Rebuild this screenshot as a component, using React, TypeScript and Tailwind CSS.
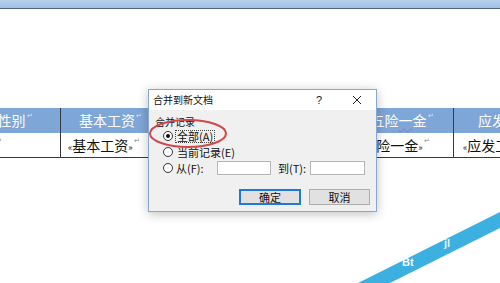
import React from "react";

const cols = [
  { head: "性别", data: "性别", w: "w-[110px] -ml-[50px]", headPad: "pl-[20px]", dataPad: "pl-[8px]" },
  { head: "基本工资", data: "基本工资", w: "w-[100px]", headPad: "", dataPad: "pl-[7px]" },
  { head: "绩效工资", data: "绩效工资", w: "w-[100px]", headPad: "", dataPad: "pl-[7px]" },
  { head: "加班费", data: "加班费", w: "w-[90px]", headPad: "", dataPad: "pl-[7px]" },
  { head: "五险一金", data: "五险一金", w: "w-[103px]", headPad: "", dataPad: "pl-[7px]" },
  { head: "应发工资", data: "应发工资", w: "w-[112px]", headPad: "", dataPad: "pl-[9px]" },
];

const Mark = ({ light }: { light?: boolean }) => (
  <span className={`text-[7px] align-top ml-[1px] ${light ? "text-[#dbe6f5]" : "text-[#8a8a8a]"}`}>↵</span>
);

const HeadText = ({ text }: { text: string }) => {
  if (text === "五险一金") {
    return (
      <>
        五险<span className="underline decoration-wavy decoration-[#9a6bc0] decoration-1 underline-offset-2">一</span>金
      </>
    );
  }
  return <>{text}</>;
};

const Radio = ({ checked }: { checked?: boolean }) => (
  <span className="w-[10px] h-[10px] rounded-full border border-[#333] bg-white flex items-center justify-center shrink-0">
    {checked && <span className="w-[4px] h-[4px] rounded-full bg-[#111]" />}
  </span>
);

export default function App() {
  return (
    <div className="relative w-[500px] h-[283px] overflow-hidden bg-white font-['Noto_Sans_CJK_SC','Noto_Sans',sans-serif]">
      {/* ribbon bar on top */}
      <div className="h-[9px] bg-gradient-to-b from-[#b8d0ee] to-[#a2bfe4] border-b border-[#53667f]" />
      <div className="h-[99px]" />

      {/* mail merge table */}
      <div className="flex flex-col">
        <div className="flex h-[25px] bg-[#7ea6d7]">
          {cols.map((c, i) => (
            <div
              key={i}
              className={`${c.w} ${c.headPad} shrink-0 flex items-center justify-center text-white text-[14px] ${i > 0 ? "border-l border-[#2f3b4a]" : ""}`}
            >
              <span className="whitespace-nowrap">
                <HeadText text={c.head} />
                <Mark light />
              </span>
            </div>
          ))}
        </div>
        <div className="flex h-[25px] border-b border-[#3a3a3a]">
          {cols.map((c, i) => (
            <div
              key={i}
              className={`${c.w} ${c.dataPad} shrink-0 flex items-center text-[#111] text-[14px] ${i > 0 ? "border-l border-[#3a3a3a]" : ""}`}
            >
              <span className="whitespace-nowrap">
                <span className="text-[9px]">«</span>
                {c.data}
                <span className="text-[9px]">»</span>
                <Mark />
              </span>
            </div>
          ))}
        </div>
      </div>

      {/* dialog */}
      <div className="absolute left-[148px] top-[89px] w-[229px] h-[123px] flex flex-col border border-[#86a8d2] bg-[#f0f0f0] shadow-[0_2px_10px_rgba(0,0,0,0.25)] text-[#111]">
        <div className="h-[20px] bg-white flex items-center pl-[4px] shrink-0">
          <span className="text-[10px] leading-none">合并到新文档</span>
          <span className="ml-auto text-[11px] leading-none font-['Liberation_Sans',sans-serif] text-[#222]">?</span>
          <svg className="ml-[30px] mr-[14px]" width="10" height="10" viewBox="0 0 10 10">
            <path d="M1 1 L9 9 M9 1 L1 9" stroke="#222" strokeWidth="1" />
          </svg>
        </div>
        <div className="flex-1 flex flex-col pt-[6px]">
          <div className="pl-[6px] text-[10px] leading-[12px]">合并记录</div>
          <div className="h-[16px] flex items-center pl-[14px] gap-[2px]">
            <Radio checked />
            <span className="text-[11px] leading-[11px] border border-dotted border-[#444] px-[1px]">全部(A)</span>
          </div>
          <div className="h-[16px] flex items-center pl-[14px] gap-[4px]">
            <Radio />
            <span className="text-[11px] leading-none">当前记录(E)</span>
          </div>
          <div className="h-[16px] flex items-center pl-[14px]">
            <Radio />
            <span className="text-[11px] leading-none w-[44px] pl-[3px]">从(F):</span>
            <span className="w-[54px] h-[14px] bg-white border border-[#b4b4b4]" />
            <span className="text-[11px] leading-none w-[39px] pl-[7px]">到(T):</span>
            <span className="w-[55px] h-[14px] bg-white border border-[#b4b4b4]" />
          </div>
          <div className="flex justify-end gap-[8px] pr-[6px] mt-[13px]">
            <button className="w-[62px] h-[16px] bg-[#e1e1e1] border border-[#1e7ad4] shadow-[inset_0_0_0_1px_#1e7ad4] text-[11px] leading-none flex items-center justify-center">
              确定
            </button>
            <button className="w-[61px] h-[16px] bg-[#e1e1e1] border border-[#adadad] text-[11px] leading-none flex items-center justify-center">
              取消
            </button>
          </div>
        </div>
      </div>

      {/* red annotation ellipse */}
      <svg className="absolute left-[148px] top-[118px]" width="82" height="32" viewBox="0 0 82 32">
        <ellipse cx="40" cy="15.5" rx="38" ry="13.5" fill="none" stroke="#d2474c" strokeWidth="2" />
      </svg>

      {/* watermark ribbon */}
      <svg className="absolute left-0 top-0 pointer-events-none" width="500" height="283" viewBox="0 0 500 283">
        <polygon points="358,283 500,212 500,228 390,283" fill="#3cb1e1" />
        <text x="402" y="266" fill="#ffffff" fontSize="11" fontWeight="bold" fontFamily="Liberation Sans, sans-serif">Bt</text>
        <text x="444" y="247" fill="#ffffff" fontSize="11" fontWeight="bold" fontFamily="Liberation Sans, sans-serif" opacity="0.85">jl</text>
      </svg>
    </div>
  );
}
